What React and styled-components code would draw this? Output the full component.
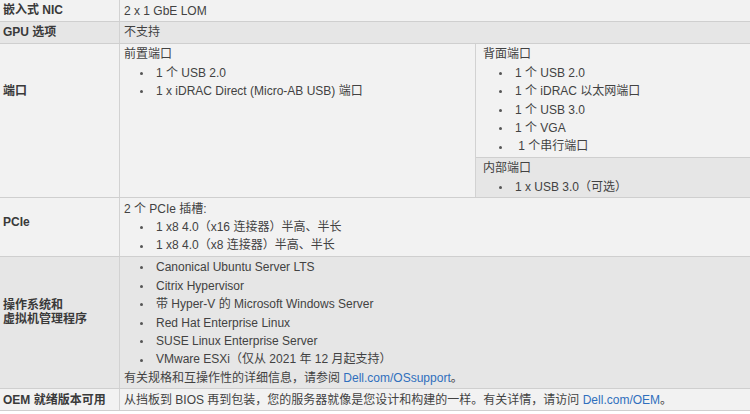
import React from "react";
import styled, { createGlobalStyle } from "styled-components";

const Global = createGlobalStyle`
  html, body { margin: 0; padding: 0; background: #ffffff; }
  body {
    font-family: "Liberation Sans", Arial, "Noto Sans CJK SC", sans-serif;
    font-size: 12px;
    color: #424242;
  }
`;

const Table = styled.div`
  width: 750px;
  display: flex;
  flex-direction: column;
`;

const Row = styled.div`
  display: grid;
  grid-template-columns: 120px 1fr;
  background: ${(p) => (p.$dark ? "#e6e6e6" : "#f2f2f2")};
  border-bottom: 1px solid #cfcfcf;
`;

const Label = styled.div`
  box-sizing: border-box;
  border-right: 1px solid #d2d2d2;
  padding: ${(p) => p.$pt || 1}px 4px ${(p) => p.$pb || 1}px 3px;
  display: flex;
  align-items: ${(p) => (p.$top ? "flex-start" : "center")};
  font-weight: bold;
  color: #3a3a3a;
  line-height: 14px;
`;

const Value = styled.div`
  padding: 1.5px 4px 1px;
  line-height: 18.4px;
`;

const Ports = styled.div`
  display: grid;
  grid-template-columns: 356px 1fr;
`;

const SubCell = styled.div`
  box-sizing: border-box;
  padding: 1.5px ${(p) => p.$px || 4}px 1px;
  line-height: 18.4px;
  background: ${(p) => (p.$dark ? "#e6e6e6" : "#f2f2f2")};
  border-right: ${(p) => (p.$divider ? "1px solid #d2d2d2" : "none")};
  border-bottom: ${(p) => (p.$under ? "1px solid #cfcfcf" : "none")};
  flex: ${(p) => (p.$grow ? 1 : "none")};
`;

const Stack = styled.div`
  display: flex;
  flex-direction: column;
`;

const List = styled.ul`
  list-style: none;
  margin: 0;
  padding: 0;
`;

const Item = styled.li`
  display: flex;
  align-items: center;
  &::before {
    content: "";
    flex: none;
    width: 3px;
    height: 3px;
    border-radius: 50%;
    background: #555;
    margin: 1px 13px 0 16px;
  }
`;

const Link = styled.a`
  color: #2f6fbd;
  text-decoration: none;
`;

export default function App() {
  return (
    <>
      <Global />
      <Table>
        <Row>
          <Label>嵌入式 NIC</Label>
          <Value>2 x 1 GbE LOM</Value>
        </Row>
        <Row $dark>
          <Label>GPU 选项</Label>
          <Value>不支持</Value>
        </Row>
        <Row>
          <Label $top $pt={40}>端口</Label>
          <Ports>
            <SubCell $divider>
              前置端口
              <List>
                <Item>1 个 USB 2.0</Item>
                <Item>1 x iDRAC Direct (Micro-AB USB) 端口</Item>
              </List>
            </SubCell>
            <Stack>
              <SubCell $grow $under $px={7}>
                背面端口
                <List>
                  <Item>1 个 USB 2.0</Item>
                  <Item>1 个 iDRAC 以太网端口</Item>
                  <Item>1 个 USB 3.0</Item>
                  <Item>1 个 VGA</Item>
                  <Item>{"\u00a01 个串行端口"}</Item>
                </List>
              </SubCell>
              <SubCell $dark $px={7}>
                内部端口
                <List>
                  <Item>1 x USB 3.0（可选）</Item>
                </List>
              </SubCell>
            </Stack>
          </Ports>
        </Row>
        <Row>
          <Label $pb={10}>PCIe</Label>
          <Value>
            2 个 PCIe 插槽:
            <List>
              <Item>1 x8 4.0（x16 连接器）半高、半长</Item>
              <Item>1 x8 4.0（x8 连接器）半高、半长</Item>
            </List>
          </Value>
        </Row>
        <Row $dark>
          <Label $pb={22}>
            操作系统和
            <br />
            虚拟机管理程序
          </Label>
          <Value>
            <List>
              <Item>Canonical Ubuntu Server LTS</Item>
              <Item>Citrix Hypervisor</Item>
              <Item>带 Hyper-V 的 Microsoft Windows Server</Item>
              <Item>Red Hat Enterprise Linux</Item>
              <Item>SUSE Linux Enterprise Server</Item>
              <Item>VMware ESXi（仅从 2021 年 12 月起支持）</Item>
            </List>
            有关规格和互操作性的详细信息，请参阅 <Link href="#">Dell.com/OSsupport</Link>。
          </Value>
        </Row>
        <Row>
          <Label>OEM 就绪版本可用</Label>
          <Value>
            从挡板到 BIOS 再到包装，您的服务器就像是您设计和构建的一样。有关详情，请访问{" "}
            <Link href="#">Dell.com/OEM</Link>。
          </Value>
        </Row>
      </Table>
    </>
  );
}
